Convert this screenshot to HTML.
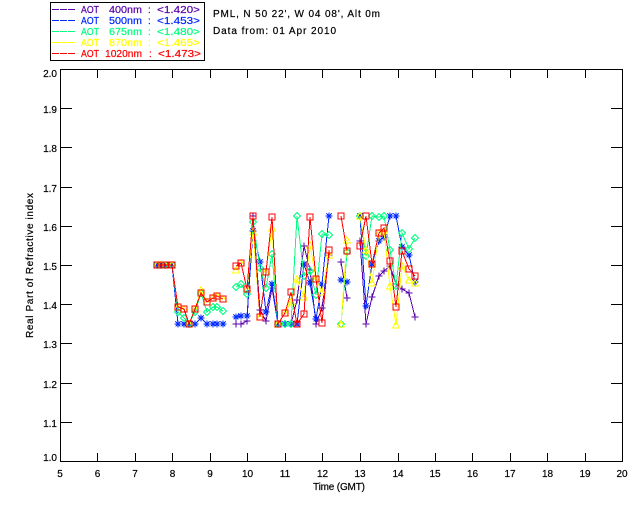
<!DOCTYPE html>
<html>
<head>
<meta charset="utf-8">
<style>
html,body{margin:0;padding:0;background:#fff;width:640px;height:512px;overflow:hidden}
svg{display:block;position:absolute;left:0;top:0}
text{font-family:"Liberation Sans",sans-serif;font-size:10px;fill:#000;stroke:#000;stroke-width:.2}
.l{text-anchor:end}
.c{text-anchor:middle}
text.t1{fill:#5a00aa;stroke:#5a00aa}
text.t2{fill:#0028ff;stroke:#0028ff}
text.t3{fill:#00ff80;stroke:#00ff80}
text.t4{fill:#ffff00;stroke:#ffff00}
text.t5{fill:#ff0000;stroke:#ff0000}
polyline{fill:none;stroke-width:1}
.p{stroke:#5a00aa;marker-start:url(#mp);marker-mid:url(#mp);marker-end:url(#mp)}
.b{stroke:#0028ff;marker-start:url(#mb);marker-mid:url(#mb);marker-end:url(#mb)}
.g{stroke:#00ff80;marker-start:url(#mg);marker-mid:url(#mg);marker-end:url(#mg)}
.y{stroke:#ffff00;marker-start:url(#my);marker-mid:url(#my);marker-end:url(#my)}
.r{stroke:#ff0000;marker-start:url(#mr);marker-mid:url(#mr);marker-end:url(#mr)}
</style>
</head>
<body>
<svg width="640" height="512" viewBox="0 0 640 512" xmlns="http://www.w3.org/2000/svg">
<defs>
<marker id="mp" markerUnits="userSpaceOnUse" markerWidth="12" markerHeight="12" refX="6" refY="6" overflow="visible"><path d="M2.5 6H9.5M6 2.5V9.5" fill="none" stroke="#5a00aa" shape-rendering="crispEdges"/></marker>
<marker id="mb" markerUnits="userSpaceOnUse" markerWidth="12" markerHeight="12" refX="6" refY="6" overflow="visible"><path d="M2.5 6H9.5M6 2.5V9.5M3.5 3.5L8.5 8.5M8.5 3.5L3.5 8.5" fill="none" stroke="#0028ff" shape-rendering="crispEdges"/></marker>
<marker id="mg" markerUnits="userSpaceOnUse" markerWidth="12" markerHeight="12" refX="6" refY="6" overflow="visible"><path d="M6 2.5L9.5 6L6 9.5L2.5 6Z" fill="none" stroke="#00ff80" shape-rendering="crispEdges"/></marker>
<marker id="my" markerUnits="userSpaceOnUse" markerWidth="12" markerHeight="12" refX="6" refY="6" overflow="visible"><path d="M6 2.5L9.5 9L2.5 9Z" fill="none" stroke="#ffff00" shape-rendering="crispEdges"/></marker>
<marker id="mr" markerUnits="userSpaceOnUse" markerWidth="12" markerHeight="12" refX="6" refY="6" overflow="visible"><path d="M3 3H9V9H3Z" fill="none" stroke="#ff0000" shape-rendering="crispEdges"/></marker>
</defs>

<g shape-rendering="crispEdges">
<rect x="50.5" y="2.5" width="154" height="58" fill="none" stroke="#000"/>
<path d="M52 9.5H75" stroke="#5a00aa" stroke-dasharray="7 1"/>
<path d="M52 20.5H75" stroke="#0028ff" stroke-dasharray="7 1"/>
<path d="M52 31.5H75" stroke="#00ff80" stroke-dasharray="7 1"/>
<path d="M52 42.5H75" stroke="#ffff00" stroke-dasharray="7 1"/>
<path d="M52 53.5H75" stroke="#ff0000" stroke-dasharray="7 1"/>

<path fill="none" stroke="#000" d="M60.5 69.5H622.5V461.5H60.5Z"/>
<path fill="none" stroke="#000" d="M97.5 461V453M135.5 461V453M172.5 461V453M210.5 461V453M247.5 461V453M285.5 461V453M322.5 461V453M360.5 461V453M398.5 461V453M435.5 461V453M472.5 461V453M510.5 461V453M547.5 461V453M585.5 461V453
M97.5 70V78M135.5 70V78M172.5 70V78M210.5 70V78M247.5 70V78M285.5 70V78M322.5 70V78M360.5 70V78M398.5 70V78M435.5 70V78M472.5 70V78M510.5 70V78M547.5 70V78M585.5 70V78
M60 108.5H72M60 147.5H72M60 187.5H72M60 226.5H72M60 265.5H72M60 304.5H72M60 343.5H72M60 383.5H72M60 422.5H72
M622 108.5H611M622 147.5H611M622 187.5H611M622 226.5H611M622 265.5H611M622 304.5H611M622 343.5H611M622 383.5H611M622 422.5H611"/>

<polyline class="p" points="157,265 161,265 165,265 172,265 178,324 184,324 189,324 195,324 201,318 207,324 213,324 217,324 223,324"/>
<polyline class="p" points="236,324 241,324 247,321 253,216 260,310 266,321 272,288 278,324 285,324 291,324 297,300 304,246 310,270 316,324 322,308 329,255"/>
<polyline class="p" points="341,262 347,298"/>
<polyline class="p" points="360,241 366,324 372,297 379,276 384,271 390,266 396,284 402,289 409,293 415,317"/>

<polyline class="b" points="157,265 161,265 165,265 172,265 178,324 184,324 189,324 195,324 201,318 207,324 213,324 217,324 223,324"/>
<polyline class="b" points="236,317 241,316 247,316 253,231 260,262 266,312 272,284 278,324 285,324 291,324 297,324 304,264 310,283 316,319 322,284 329,216"/>
<polyline class="b" points="341,280 347,282"/>
<polyline class="b" points="360,216 366,306 372,264 379,241 384,237 390,216 396,216 402,247 409,255 415,282"/>

<polyline class="g" points="157,265 161,265 165,265 172,265 178,312 184,318 189,324 195,312 201,293 207,312 213,307 217,307 223,311"/>
<polyline class="g" points="236,287 241,284 247,294 253,222 260,268 266,288 272,254 278,324 285,324 291,324 297,216 304,276 310,271 316,295 322,234 329,235"/>
<polyline class="g" points="341,324 347,252"/>
<polyline class="g" points="360,216 366,256 372,216 379,217 384,216 390,250 396,286 402,233 409,249 415,238"/>

<polyline class="y" points="157,265 161,265 165,265 172,265 178,307 184,309 189,324 195,309 201,290 207,302 213,298 217,296 223,299"/>
<polyline class="y" points="236,270 241,263 247,289 253,232 260,317 266,272 272,228 278,324 285,313 291,302 297,279 304,297 310,245 316,279 322,292 329,255"/>
<polyline class="y" points="341,324 347,240"/>
<polyline class="y" points="360,216 366,250 372,283 379,233 384,231 390,286 396,325 402,266 409,280 415,283"/>

<polyline class="r" points="157,265 161,265 165,265 172,265 178,307 184,309 189,324 195,309 201,293 207,302 213,298 217,296 223,299"/>
<polyline class="r" points="236,266 241,263 247,289 253,216 260,317 266,272 272,217 278,324 285,313 291,292 297,324 304,314 310,217 316,279 322,323 329,250"/>
<polyline class="r" points="341,216 347,251"/>
<polyline class="r" points="360,246 366,216 372,264 379,233 384,228 390,261 396,307 402,251 409,269 415,276"/>
</g>

<text class="t1" x="81" y="13" textLength="18" lengthAdjust="spacingAndGlyphs">AOT</text>
<text class="t1" x="109" y="13" textLength="33" lengthAdjust="spacingAndGlyphs">400nm</text>
<text class="t1" x="148" y="13">:</text>
<text class="t1" x="157" y="13" textLength="43" lengthAdjust="spacingAndGlyphs">&lt;1.420&gt;</text>

<text class="t2" x="81" y="24" textLength="18" lengthAdjust="spacingAndGlyphs">AOT</text>
<text class="t2" x="109" y="24" textLength="33" lengthAdjust="spacingAndGlyphs">500nm</text>
<text class="t2" x="148" y="24">:</text>
<text class="t2" x="157" y="24" textLength="43" lengthAdjust="spacingAndGlyphs">&lt;1.453&gt;</text>

<text class="t3" x="81" y="35" textLength="18" lengthAdjust="spacingAndGlyphs">AOT</text>
<text class="t3" x="109" y="35" textLength="33" lengthAdjust="spacingAndGlyphs">675nm</text>
<text class="t3" x="148" y="35">:</text>
<text class="t3" x="157" y="35" textLength="43" lengthAdjust="spacingAndGlyphs">&lt;1.480&gt;</text>

<text class="t4" x="81" y="46" textLength="18" lengthAdjust="spacingAndGlyphs">AOT</text>
<text class="t4" x="109" y="46" textLength="33" lengthAdjust="spacingAndGlyphs">870nm</text>
<text class="t4" x="148" y="46">:</text>
<text class="t4" x="157" y="46" textLength="43" lengthAdjust="spacingAndGlyphs">&lt;1.465&gt;</text>

<text class="t5" x="81" y="57" textLength="18" lengthAdjust="spacingAndGlyphs">AOT</text>
<text class="t5" x="105" y="57" textLength="37" lengthAdjust="spacingAndGlyphs">1020nm</text>
<text class="t5" x="149" y="57">:</text>
<text class="t5" x="158" y="57" textLength="43" lengthAdjust="spacingAndGlyphs">&lt;1.473&gt;</text>

<text x="213" y="17" textLength="167" lengthAdjust="spacing">PML, N 50 22', W 04 08', Alt 0m</text>
<text x="213" y="34" textLength="123" lengthAdjust="spacing">Data from: 01 Apr 2010</text>

<text class="l" x="57" y="77">2.0</text>
<text class="l" x="57" y="113">1.9</text>
<text class="l" x="57" y="152">1.8</text>
<text class="l" x="57" y="192">1.7</text>
<text class="l" x="57" y="231">1.6</text>
<text class="l" x="57" y="270">1.5</text>
<text class="l" x="57" y="309">1.4</text>
<text class="l" x="57" y="348">1.3</text>
<text class="l" x="57" y="388">1.2</text>
<text class="l" x="57" y="427">1.1</text>
<text class="l" x="57" y="461">1.0</text>

<text class="c" x="60" y="477">5</text>
<text class="c" x="97.5" y="477">6</text>
<text class="c" x="135" y="477">7</text>
<text class="c" x="172.5" y="477">8</text>
<text class="c" x="210" y="477">9</text>
<text class="c" x="247.5" y="477">10</text>
<text class="c" x="285" y="477">11</text>
<text class="c" x="322.5" y="477">12</text>
<text class="c" x="360" y="477">13</text>
<text class="c" x="398" y="477">14</text>
<text class="c" x="435" y="477">15</text>
<text class="c" x="472.5" y="477">16</text>
<text class="c" x="510" y="477">17</text>
<text class="c" x="547.5" y="477">18</text>
<text class="c" x="585" y="477">19</text>
<text class="c" x="622" y="477">20</text>

<text x="313" y="490" textLength="52" lengthAdjust="spacing">Time (GMT)</text>
<text transform="translate(33,338) rotate(-90)" textLength="145" lengthAdjust="spacing">Real Part of Refractive index</text>
</svg>
</body>
</html>
